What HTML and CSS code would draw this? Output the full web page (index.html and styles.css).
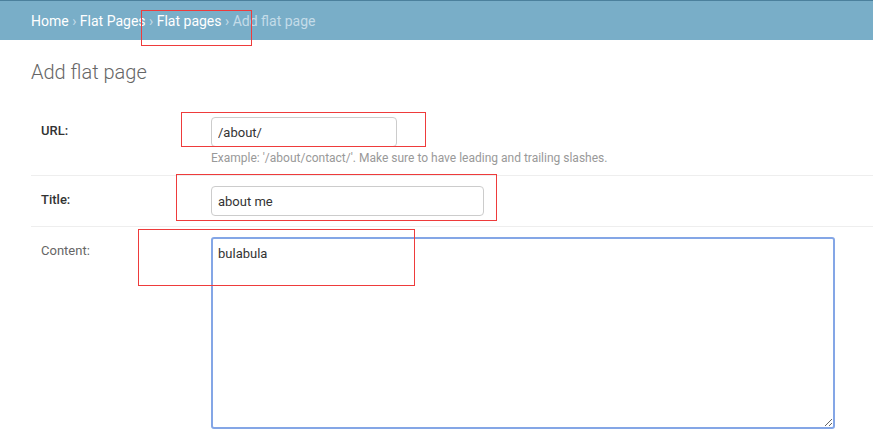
FILE: index.html
```html
<!DOCTYPE html>
<html lang="en">
<head>
  <meta charset="UTF-8" />
  <title>Add flat page</title>
  <link rel="stylesheet" href="styles.css">
</head>
<body>
  <div class="breadcrumbs">
    <a href="#">Home</a> › <a href="#">Flat Pages</a> › <a href="#">Flat pages</a> › Add flat page
  </div>

  <div id="content">
    <h1>Add flat page</h1>
    <form>
      <div class="form-row">
        <label class="required" for="id_url">URL:</label>
        <div class="field">
          <input type="text" id="id_url" class="vURL" value="/about/">
          <div class="help">Example: '/about/contact/'. Make sure to have leading and trailing slashes.</div>
        </div>
      </div>
      <div class="form-row">
        <label class="required" for="id_title">Title:</label>
        <div class="field">
          <input type="text" id="id_title" class="vTitle" value="about me">
        </div>
      </div>
      <div class="form-row">
        <label for="id_content">Content:</label>
        <div class="field">
          <textarea id="id_content" class="vLargeTextField">bulabula</textarea>
        </div>
      </div>
    </form>
  </div>

  <!-- annotation boxes drawn over the screenshot -->
  <div class="mark mark-crumb"></div>
  <div class="mark mark-url"></div>
  <div class="mark mark-title"></div>
  <div class="mark mark-content"></div>
</body>
</html>
```

FILE: styles.css
```css
body {
  margin: 0;
  font-family: Roboto, "Liberation Sans", sans-serif;
  font-size: 14px;
  color: #333;
  background: #fff;
  position: relative;
  overflow: hidden;
}
a {
  color: #fff;
  text-decoration: none;
}
.breadcrumbs {
  background: #79aec8;
  border-top: 1px solid #4b809c;
  padding: 11px 31px 10px;
  line-height: 18px;
  font-size: 14px;
  color: #c4dce8;
}
#content {
  padding: 20px 0 0 31px;
}
h1 {
  margin: 0 0 23px;
  font-size: 20px;
  font-weight: 300;
  line-height: 24px;
  color: #666;
}
.form-row {
  display: flex;
  padding: 10px;
  border-bottom: 1px solid #eee;
  font-size: 13px;
}
.form-row label {
  width: 160px;
  padding: 4px 10px 0 0;
  line-height: 20px;
  color: #666;
}
.form-row label.required {
  color: #333;
  font-weight: 500;
}
input, textarea {
  box-sizing: border-box;
  font-family: Roboto, "Liberation Sans", sans-serif;
  font-size: 13px;
  color: #333;
  border: 1px solid #ccc;
  border-radius: 4px;
  padding: 5px 6px;
  margin: 0;
}
input {
  display: block;
  height: 30px;
}
.vURL {
  width: 186px;
}
.vTitle {
  width: 273px;
}
.vLargeTextField {
  display: block;
  width: 624px;
  height: 192px;
  border: 2px solid #84a6e6;
  border-radius: 3px;
  padding: 7px 5px;
  outline: none;
  resize: both;
}
.help {
  margin-top: 4px;
  font-size: 12px;
  line-height: 14px;
  color: #999;
}
.mark {
  position: absolute;
  border: 1px solid #ee3b3b;
  box-sizing: border-box;
}
.mark-crumb {
  left: 141px;
  top: 10px;
  width: 111px;
  height: 36px;
}
.mark-url {
  left: 181px;
  top: 112px;
  width: 245px;
  height: 35px;
}
.mark-title {
  left: 176px;
  top: 174px;
  width: 321px;
  height: 47px;
}
.mark-content {
  left: 138px;
  top: 229px;
  width: 277px;
  height: 57px;
}
```
